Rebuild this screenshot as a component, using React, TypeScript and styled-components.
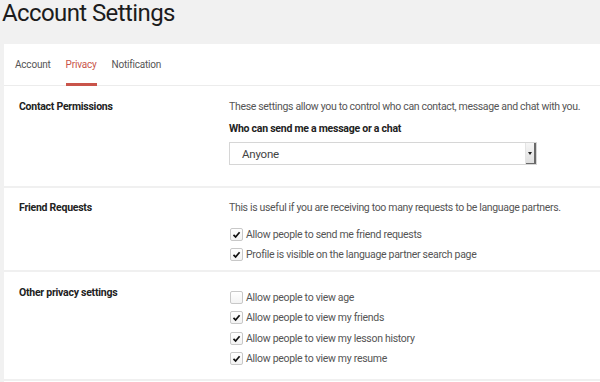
import React from 'react';
import styled, { createGlobalStyle } from 'styled-components';

const GlobalStyle = createGlobalStyle`
  html, body {
    margin: 0;
    padding: 0;
    background: #f1f1f1;
    font-family: Roboto, "Liberation Sans", Arial, sans-serif;
    -webkit-font-smoothing: antialiased;
  }
`;

const Page = styled.div`
  width: 600px;
  height: 382px;
  overflow: hidden;
`;

const Title = styled.h1`
  margin: 0;
  height: 44px;
  padding-left: 2px;
  font-size: 24px;
  font-weight: 400;
  letter-spacing: -0.6px;
  line-height: 27px;
  color: #1c1c1c;
`;

const Card = styled.div`
  margin-left: 4px;
  background: #fff;
  min-height: 340px;
`;

const TabBar = styled.div`
  display: flex;
  gap: 15px;
  height: 41px;
  padding-left: 11px;
  border-bottom: 1px solid #ececec;
`;

const Tab = styled.div<{ $active?: boolean }>`
  display: flex;
  align-items: center;
  padding-top: 1px;
  font-size: 10px;
  letter-spacing: -0.2px;
  color: ${(p) => (p.$active ? '#c9544a' : '#555')};
  border-bottom: 3px solid ${(p) => (p.$active ? '#c9544a' : 'transparent')};
  margin-bottom: -1px;
  box-sizing: border-box;
`;

const Section = styled.div<{ $top: number; $bottom: number }>`
  display: grid;
  grid-template-columns: 210px 1fr;
  padding: ${(p) => p.$top}px 15px ${(p) => p.$bottom}px;
  border-bottom: 2px solid #f0f0f0;
`;

const Label = styled.div`
  font-size: 10.5px;
  letter-spacing: -0.25px;
  line-height: 14px;
  font-weight: 700;
  color: #222;
`;

const Desc = styled.div`
  font-size: 10.5px;
  letter-spacing: -0.33px;
  line-height: 14px;
  color: #555;
  white-space: nowrap;
`;

const FieldLabel = styled(Label)`
  margin-top: 8px;
`;

const Select = styled.div`
  margin-top: 6px;
  width: 308px;
  height: 23px;
  box-sizing: border-box;
  border: 1px solid #d6d6d6;
  display: flex;
  align-items: center;
  justify-content: space-between;
  font-size: 11.5px;
  letter-spacing: -0.2px;
  color: #444;
`;

const SelectValue = styled.span`
  padding-left: 12px;
`;

const SelectButton = styled.span`
  width: 10px;
  height: 21px;
  background: linear-gradient(#f6f6f6, #dedede);
  border-left: 1px solid #e4e4e4;
  box-shadow: inset -2px -1px 0 #6a6a6a;
  display: flex;
  align-items: center;
  justify-content: center;
  &::after {
    content: '';
    border-left: 2px solid transparent;
    border-right: 2px solid transparent;
    border-top: 3px solid #222;
    margin-right: 2px;
  }
`;

const CheckList = styled.div<{ $top: number }>`
  margin-top: ${(p) => p.$top}px;
`;

const CheckRow = styled.label`
  display: flex;
  align-items: center;
  gap: 3px;
  height: 20.5px;
  font-size: 10.5px;
  letter-spacing: -0.3px;
  color: #555;
  white-space: nowrap;
`;

const Box = styled.span`
  width: 11px;
  height: 11px;
  margin-left: 1px;
  border: 1px solid #c8c8c8;
  border-radius: 2px;
  background: linear-gradient(#fff, #f3f3f3);
  display: flex;
  align-items: center;
  justify-content: center;
`;

const Check = ({ on }: { on: boolean }) => (
  <Box>
    {on && (
      <svg width="9" height="9" viewBox="0 0 9 9">
        <path d="M1.5 4.8 L3.6 7 L7.6 2.2" fill="none" stroke="#111" strokeWidth="1.7" />
      </svg>
    )}
  </Box>
);

const Option = ({ on, text }: { on: boolean; text: string }) => (
  <CheckRow>
    <Check on={on} />
    {text}
  </CheckRow>
);

const App: React.FC = () => {
  return (
    <Page>
      <GlobalStyle />
      <Title>Account Settings</Title>
      <Card>
        <TabBar>
          <Tab>Account</Tab>
          <Tab $active>Privacy</Tab>
          <Tab>Notification</Tab>
        </TabBar>

        <Section $top={14} $bottom={21}>
          <Label>Contact Permissions</Label>
          <div>
            <Desc>These settings allow you to control who can contact, message and chat with you.</Desc>
            <FieldLabel>Who can send me a message or a chat</FieldLabel>
            <Select>
              <SelectValue>Anyone</SelectValue>
              <SelectButton />
            </Select>
          </div>
        </Section>

        <Section $top={13} $bottom={5}>
          <Label>Friend Requests</Label>
          <div>
            <Desc>This is useful if you are receiving too many requests to be language partners.</Desc>
            <CheckList $top={9}>
              <Option on text="Allow people to send me friend requests" />
              <Option on text="Profile is visible on the language partner search page" />
            </CheckList>
          </div>
        </Section>

        <Section $top={14} $bottom={10}>
          <Label>Other privacy settings</Label>
          <CheckList $top={1}>
            <Option on={false} text="Allow people to view age" />
            <Option on text="Allow people to view my friends" />
            <Option on text="Allow people to view my lesson history" />
            <Option on text="Allow people to view my resume" />
          </CheckList>
        </Section>
      </Card>
    </Page>
  );
};

export default App;
